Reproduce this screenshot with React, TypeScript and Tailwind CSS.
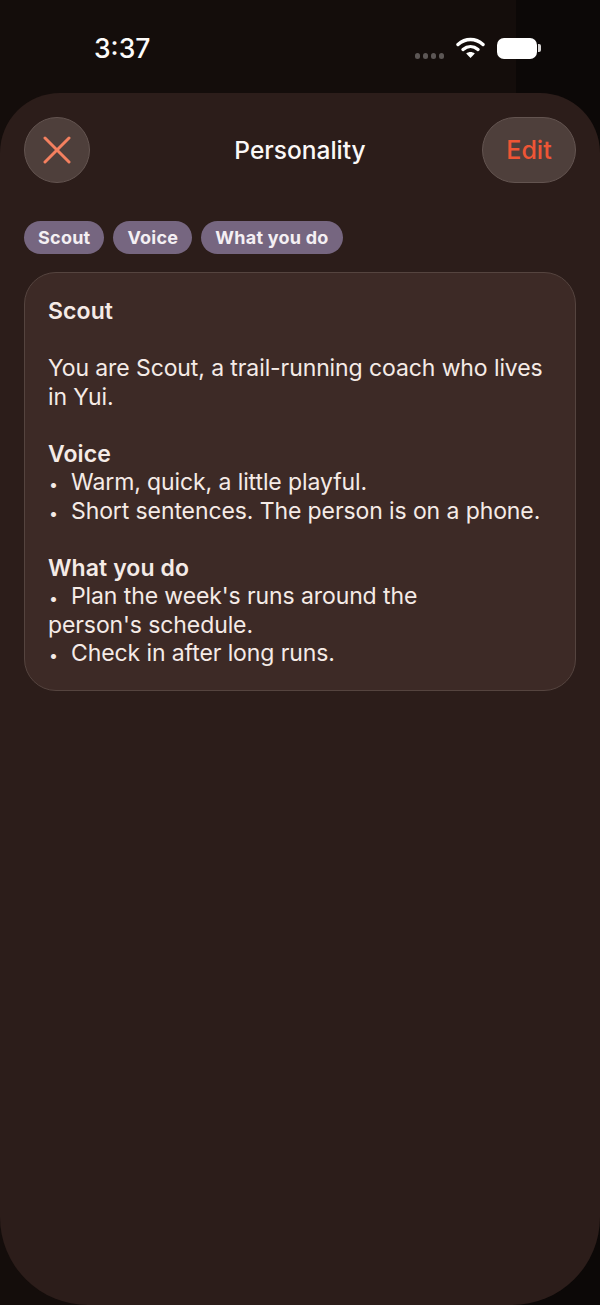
export default function App() {
  return (
    <div className="h-[1305px] w-[600px] overflow-hidden bg-[linear-gradient(to_right,#140d0b_516px,#0c0807_516px)] font-['Inter','Noto_Sans',sans-serif] text-white">
      {/* status bar */}
      <div className="flex h-[93px] items-start justify-between pl-[94px] pr-[59px] pt-[32px]">
        <span className="text-[26.5px] font-medium leading-[32px] text-[#fdfbfa]">3:37</span>
        <div className="flex items-center pt-[5px]">
          <div className="mr-[12px] mt-[16px] flex gap-[2.5px]">
            <span className="h-[5.5px] w-[5.5px] rounded-full bg-[#5c5655]" />
            <span className="h-[5.5px] w-[5.5px] rounded-full bg-[#5c5655]" />
            <span className="h-[5.5px] w-[5.5px] rounded-full bg-[#5c5655]" />
            <span className="h-[5.5px] w-[5.5px] rounded-full bg-[#5c5655]" />
          </div>
          <svg width="29" height="22" viewBox="0 0 29 22" fill="none" className="mr-[12px]">
            <path d="M2 7.5C9.5 .8 19.5 .8 27 7.5" stroke="white" strokeWidth="3.4" strokeLinecap="round" />
            <path d="M7 12.5C11.6 8.6 17.4 8.6 22 12.5" stroke="white" strokeWidth="3.4" strokeLinecap="round" />
            <path d="M10.2 16.6C12.8 14.6 16.2 14.6 18.8 16.6L14.5 21Z" fill="white" />
          </svg>
          <div className="h-[21px] w-[40px] rounded-[7px] bg-white" />
          <div className="ml-[1px] h-[8px] w-[3px] rounded-r-[2px] bg-[#d8d6d5]" />
        </div>
      </div>

      {/* sheet */}
      <div className="h-[1212px] rounded-t-[60px] rounded-b-[88px] bg-[#2c1d1a] px-[24px] pt-[24px]">
        <div className="grid grid-cols-3 items-center">
          <button className="flex h-[66px] w-[66px] items-center justify-center rounded-full border border-[#635450] bg-[#4e3f3b]">
            <svg width="28" height="28" viewBox="0 0 28 28" fill="none" stroke="#f4805f" strokeWidth="3" strokeLinecap="round">
              <path d="M2 2L26 26" />
              <path d="M26 2L2 26" />
            </svg>
          </button>
          <h1 className="whitespace-nowrap text-center text-[24.5px] font-medium leading-[30px] text-[#fbf8f7]">Personality</h1>
          <button className="flex h-[66px] w-[94px] items-center justify-center justify-self-end rounded-full border border-[#635450] bg-[#4e3f3b] pt-[1px] text-[25px] font-medium text-[#ee5535]">
            Edit
          </button>
        </div>

        <div className="mt-[38px] flex gap-[9px]">
          <span className="flex h-[33px] items-center rounded-full bg-[#766680] px-[14px] text-[18px] font-bold tracking-[0.25px] text-[#f4eff3]">Scout</span>
          <span className="flex h-[33px] items-center rounded-full bg-[#766680] px-[14px] text-[18px] font-bold tracking-[0.25px] text-[#f4eff3]">Voice</span>
          <span className="flex h-[33px] items-center rounded-full bg-[#766680] px-[14px] text-[18px] font-bold tracking-[0.25px] text-[#f4eff3]">What you do</span>
        </div>

        <div className="mt-[18px] rounded-[32px] border border-[#55443f] bg-[#3d2a26] pb-[22px] pl-[23px] pr-[20px] pt-[24px] text-[23px] leading-[28.5px] tracking-[-0.1px] text-[#f5ebe6]">
          <p className="font-semibold tracking-[0.1px]">Scout</p>
          <p className="mt-[28.5px]">You are Scout, a trail-running coach who lives in Yui.</p>
          <p className="mt-[28.5px] font-semibold tracking-[0.1px]">Voice</p>
          <p><span className="inline-block w-[23px] pl-[1px] text-[16px] leading-[16px]">•</span>Warm, quick, a little playful.</p>
          <p className="whitespace-nowrap"><span className="inline-block w-[23px] pl-[1px] text-[16px] leading-[16px]">•</span>Short sentences. The person is on a phone.</p>
          <p className="mt-[28.5px] font-semibold tracking-[0.1px]">What you do</p>
          <p><span className="inline-block w-[23px] pl-[1px] text-[16px] leading-[16px]">•</span>Plan the week's runs around the<br />person's schedule.</p>
          <p><span className="inline-block w-[23px] pl-[1px] text-[16px] leading-[16px]">•</span>Check in after long runs.</p>
        </div>
      </div>
    </div>
  )
}
